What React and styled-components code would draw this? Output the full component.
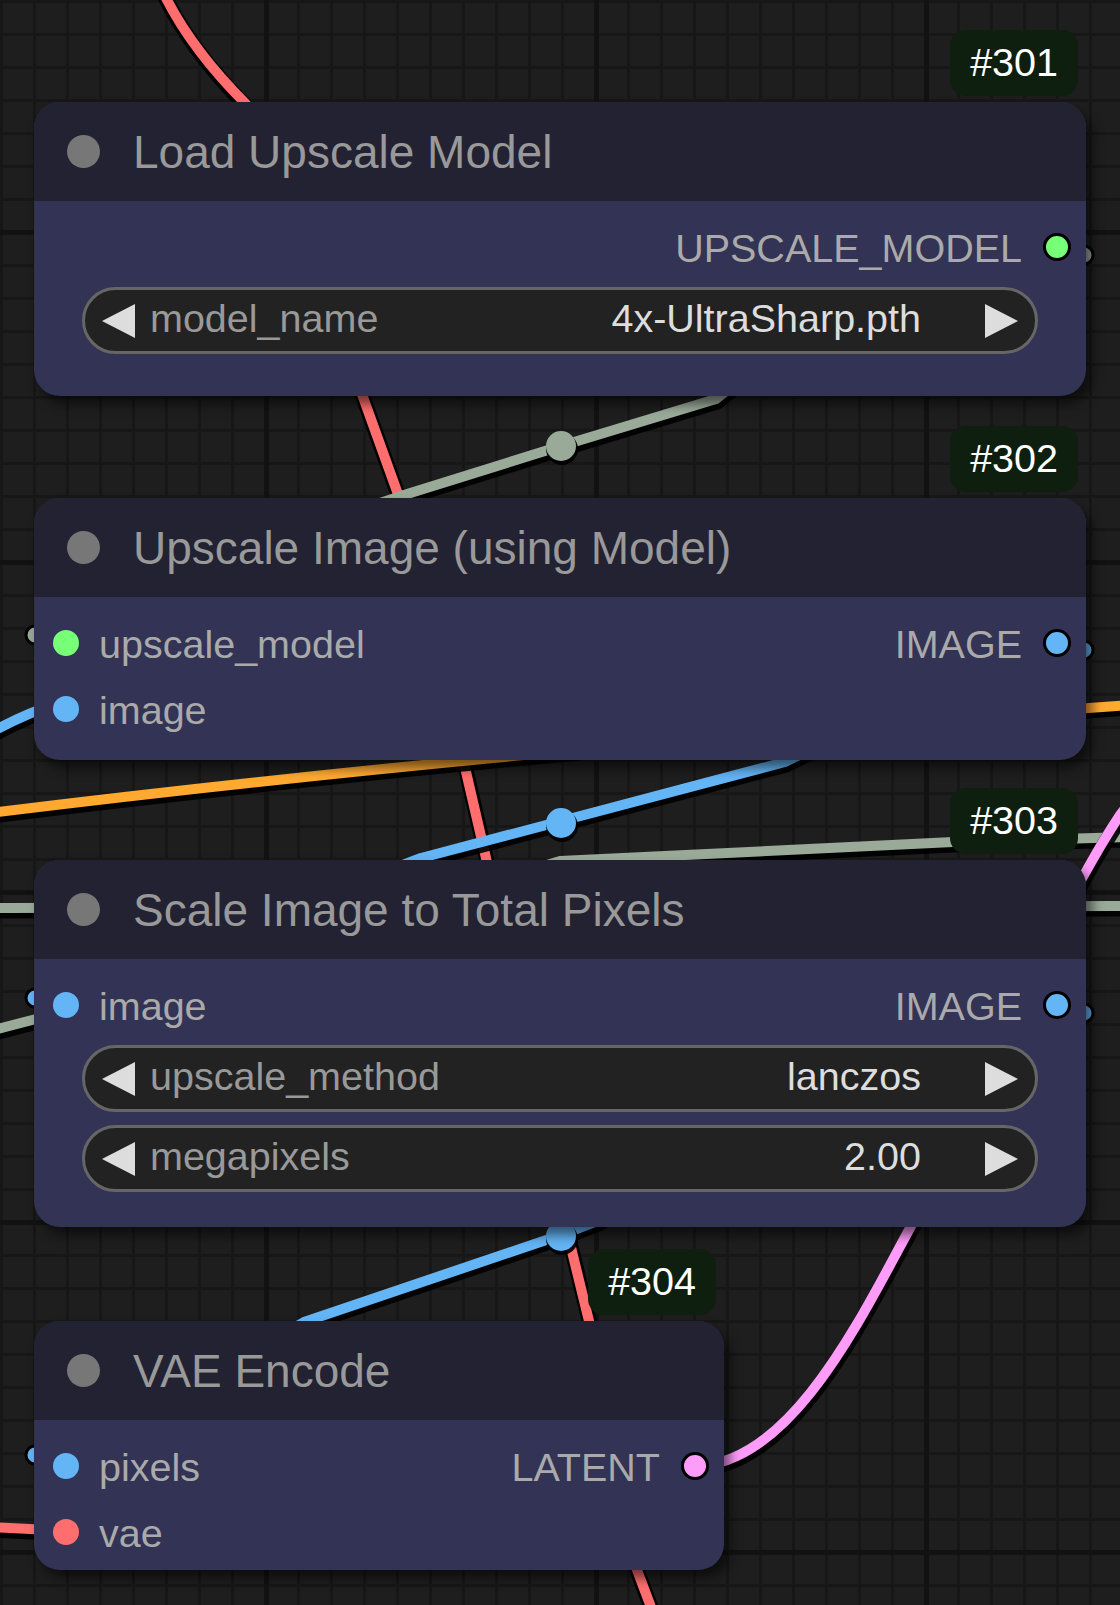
import React from "react";
import styled, { createGlobalStyle } from "styled-components";

// node graph data, canvas coordinates in px (zoomed LiteGraph view)
const NODES = [
  {
    id: 301,
    title: "Load Upscale Model",
    x: 34,
    y: 102,
    w: 1052,
    bodyH: 195,
    rows: [{ output: { label: "UPSCALE_MODEL", color: "#77FF77" } }],
    widgets: [{ label: "model_name", value: "4x-UltraSharp.pth" }],
  },
  {
    id: 302,
    title: "Upscale Image (using Model)",
    x: 34,
    y: 498,
    w: 1052,
    bodyH: 163,
    rows: [
      {
        input: { label: "upscale_model", color: "#77FF77" },
        output: { label: "IMAGE", color: "#64B5F6" },
      },
      { input: { label: "image", color: "#64B5F6" } },
    ],
  },
  {
    id: 303,
    title: "Scale Image to Total Pixels",
    x: 34,
    y: 860,
    w: 1052,
    bodyH: 268,
    rows: [
      {
        input: { label: "image", color: "#64B5F6" },
        output: { label: "IMAGE", color: "#64B5F6" },
      },
    ],
    widgets: [
      { label: "upscale_method", value: "lanczos" },
      { label: "megapixels", value: "2.00" },
    ],
  },
  {
    id: 304,
    title: "VAE Encode",
    x: 34,
    y: 1321,
    w: 690,
    bodyH: 150,
    rows: [
      {
        input: { label: "pixels", color: "#64B5F6" },
        output: { label: "LATENT", color: "#FF9CF9" },
      },
      { input: { label: "vae", color: "#FF6E6E" } },
    ],
  },
];

// links are drawn behind the nodes, hidden parts just run straight
const LINKS = [
  {
    color: "#FF6E6E",
    d: "M163,-8 Q190,48 246,104 L363,397 L399,497 L464,763 L486,858 L566,1227 L589,1321 L637,1570 L654,1615",
  },
  { color: "#FF6E6E", d: "M-10,1527 L70,1531" },
  { color: "#99AA99", d: "M380,503 L404,495 L561,446 L716,399 L740,380" },
  { color: "#99AA99", d: "M-10,908 L1130,906" },
  { color: "#99AA99", d: "M1130,837 L953,842 L560,861 L40,1018 L-10,1031" },
  { color: "#FFA931", d: "M-10,813 Q500,750 1130,705" },
  { color: "#64B5F6", d: "M-10,733 Q20,716 60,702" },
  { color: "#64B5F6", d: "M400,866 L421,858 L785,762 L820,745" },
  { color: "#64B5F6", d: "M285,1333 L304,1322 L561,1235 L600,1220" },
  {
    color: "#FF9CF9",
    d: "M694,1466 C790,1466 860,1320 910,1228 C960,1136 1050,920 1120,815 L1135,795",
  },
];

const MARKERS = [
  { x: 561, y: 446, color: "#99AA99" },
  { x: 561, y: 823, color: "#64B5F6" },
  { x: 561, y: 1236, color: "#64B5F6" },
];

// little link ends peeking out past the node edges
const STUBS = [
  { x: 1084, y: 255, color: "#99AA99" },
  { x: 1084, y: 650, color: "#64B5F6" },
  { x: 1084, y: 1013, color: "#64B5F6" },
  { x: 35, y: 635, color: "#99AA99" },
  { x: 35, y: 998, color: "#64B5F6" },
  { x: 35, y: 1455, color: "#64B5F6" },
];

const GlobalStyle = createGlobalStyle`
  html, body {
    margin: 0;
    padding: 0;
    background: #1e1e1e;
  }
  body {
    font-family: "Liberation Sans", Arial, sans-serif;
  }
`;

const Canvas = styled.div`
  position: relative;
  width: 1120px;
  height: 1605px;
  overflow: hidden;
  background-color: #1e1e1e;
  background-image: linear-gradient(to right, #121212 5px, transparent 5px),
    linear-gradient(to bottom, #121212 5px, transparent 5px),
    linear-gradient(to right, #171717 3px, transparent 3px),
    linear-gradient(to bottom, #171717 3px, transparent 3px);
  background-size: 330px 100%, 100% 330px, 33px 100%, 100% 33px;
  background-position: 264px 0, 0 230px, 0 0, 0 0;
`;

const Wires = styled.svg`
  position: absolute;
  left: 0;
  top: 0;
`;

const NodeWrap = styled.div`
  position: absolute;
  left: ${(p) => p.$x}px;
  top: ${(p) => p.$y}px;
  width: ${(p) => p.$w}px;
`;

const Badge = styled.div`
  position: absolute;
  right: 8px;
  bottom: calc(100% + 6px);
  height: 66px;
  padding: 0 20px;
  display: flex;
  align-items: center;
  border-radius: 16px;
  background: #0f1f0f;
  color: #ffffff;
  font-size: 39.5px;
  line-height: 1;
`;

const Card = styled.div`
  border-radius: 26px;
  overflow: hidden;
  background: #333355;
  box-shadow: 6px 8px 12px rgba(0, 0, 0, 0.55);
`;

const Header = styled.div`
  height: 99px;
  display: flex;
  align-items: center;
  background: #222233;
`;

const HeaderDot = styled.span`
  width: 33px;
  height: 33px;
  margin-left: 33px;
  border-radius: 50%;
  background: #777777;
  flex-shrink: 0;
`;

const Title = styled.span`
  margin-left: 33px;
  color: #999999;
  font-size: 46px;
  line-height: 1;
  white-space: nowrap;
`;

const Body = styled.div`
  height: ${(p) => p.$h}px;
  box-sizing: border-box;
  padding-top: 13px;
  display: flex;
  flex-direction: column;
`;

const SlotRow = styled.div`
  height: 66px;
  flex-shrink: 0;
  display: flex;
  align-items: center;
`;

const Input = styled.div`
  display: flex;
  align-items: center;
  gap: 20px;
  padding-left: 19px;
`;

const Output = styled.div`
  display: flex;
  align-items: center;
  gap: 21px;
  margin-left: auto;
  padding-right: 15px;
`;

const InDot = styled.span`
  width: 26px;
  height: 26px;
  border-radius: 50%;
  background: ${(p) => p.$color};
  flex-shrink: 0;
`;

const OutDot = styled.span`
  width: 22px;
  height: 22px;
  border: 3px solid #000000;
  border-radius: 50%;
  background: ${(p) => p.$color};
  flex-shrink: 0;
`;

const SlotLabel = styled.span`
  color: #aaaaaa;
  font-size: 39.5px;
  line-height: 1;
  padding-top: 4px;
  white-space: nowrap;
`;

const WidgetStack = styled.div`
  margin-top: 7px;
  padding: 0 48px;
  display: flex;
  flex-direction: column;
  gap: 13px;
`;

const Widget = styled.div`
  height: 67px;
  box-sizing: border-box;
  border: 3px solid #666666;
  border-radius: 34px;
  background: #222222;
  padding: 0 17px;
  display: flex;
  align-items: center;
`;

const ArrowSvg = styled.svg`
  flex-shrink: 0;
  display: block;
`;

const WidgetLabel = styled.span`
  margin-left: 15px;
  color: #999999;
  font-size: 39.5px;
  line-height: 1;
  padding-bottom: 3px;
  white-space: nowrap;
`;

const WidgetValue = styled.span`
  margin-left: auto;
  margin-right: 64px;
  color: #dddddd;
  font-size: 39.5px;
  line-height: 1;
  padding-bottom: 3px;
  white-space: nowrap;
`;

const Arrow = ({ dir }) => (
  <ArrowSvg width="33" height="34" viewBox="0 0 33 34">
    <polygon
      points={dir === "left" ? "0,17 33,0 33,34" : "0,0 33,17 0,34"}
      fill="#dddddd"
    />
  </ArrowSvg>
);

const Links = () => (
  <Wires width="1120" height="1605" viewBox="0 0 1120 1605">
    <g fill="none" strokeLinecap="round" strokeLinejoin="round">
      {LINKS.map((l, i) => (
        <g key={i}>
          <path
            d={l.d}
            stroke="#000"
            strokeOpacity="0.9"
            strokeWidth="15"
            transform="translate(1 3)"
          />
          <path d={l.d} stroke={l.color} strokeWidth="10" />
        </g>
      ))}
    </g>
    {MARKERS.map((m, i) => (
      <g key={i}>
        <circle cx={m.x + 1} cy={m.y + 3} r="16" fill="#000" opacity="0.9" />
        <circle cx={m.x} cy={m.y} r="15" fill={m.color} />
      </g>
    ))}
    {STUBS.map((s, i) => (
      <circle
        key={i}
        cx={s.x}
        cy={s.y}
        r="9"
        fill={s.color}
        stroke="#000"
        strokeWidth="3"
      />
    ))}
  </Wires>
);

const Node = ({ node }) => (
  <NodeWrap $x={node.x} $y={node.y} $w={node.w}>
    <Badge>#{node.id}</Badge>
    <Card>
      <Header>
        <HeaderDot />
        <Title>{node.title}</Title>
      </Header>
      <Body $h={node.bodyH}>
        {node.rows.map((row, i) => (
          <SlotRow key={i}>
            {row.input && (
              <Input>
                <InDot $color={row.input.color} />
                <SlotLabel>{row.input.label}</SlotLabel>
              </Input>
            )}
            {row.output && (
              <Output>
                <SlotLabel>{row.output.label}</SlotLabel>
                <OutDot $color={row.output.color} />
              </Output>
            )}
          </SlotRow>
        ))}
        {node.widgets && (
          <WidgetStack>
            {node.widgets.map((w) => (
              <Widget key={w.label}>
                <Arrow dir="left" />
                <WidgetLabel>{w.label}</WidgetLabel>
                <WidgetValue>{w.value}</WidgetValue>
                <Arrow dir="right" />
              </Widget>
            ))}
          </WidgetStack>
        )}
      </Body>
    </Card>
  </NodeWrap>
);

const App = () => (
  <>
    <GlobalStyle />
    <Canvas>
      <Links />
      {NODES.map((n) => (
        <Node key={n.id} node={n} />
      ))}
    </Canvas>
  </>
);

export default App;
